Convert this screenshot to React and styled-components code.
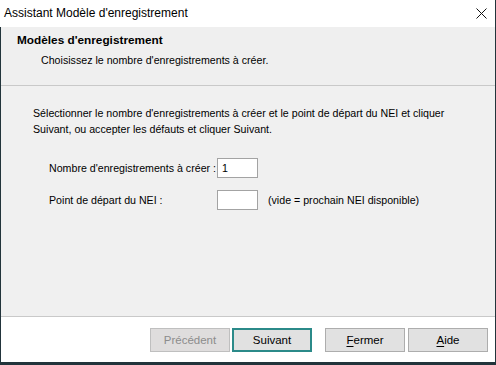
import React, { useState } from "react";
import styled, { createGlobalStyle } from "styled-components";

const GlobalStyle = createGlobalStyle`
  html, body {
    margin: 0;
    padding: 0;
    background: #22343b;
    overflow: hidden;
  }
  * { box-sizing: border-box; }
`;

const Window = styled.div`
  width: 494px;
  height: 362px;
  margin-left: 1px;
  display: flex;
  flex-direction: column;
  background: #f0f0f0;
  font-family: "Liberation Sans", Arial, sans-serif;
  font-size: 10.65px;
  color: #000;
`;

const TitleBar = styled.div`
  height: 27px;
  flex: none;
  display: flex;
  align-items: center;
  justify-content: space-between;
  padding: 0 8px 1px 4px;
  background: #ffffff;
  font-size: 12px;
  margin-left: -1px;
`;

const CloseIcon = styled.svg`
  width: 11px;
  height: 11px;
  margin-top: 1px;
`;

const Header = styled.div`
  height: 59px;
  flex: none;
  padding: 7px 16px 0;
  border-bottom: 1px solid #c9c9c9;
  background: #efefef;
`;

const HeaderTitle = styled.div`
  font-weight: bold;
  font-size: 11.8px;
  line-height: 13px;
`;

const HeaderSub = styled.div`
  margin-top: 7px;
  padding-left: 24px;
  line-height: 13px;
`;

const Body = styled.div`
  flex: 1;
  padding: 19px 32px 0;
`;

const Intro = styled.p`
  margin: 0;
  line-height: 16px;
`;

const Form = styled.div`
  margin-top: 21px;
  padding-left: 16px;
  display: grid;
  grid-template-columns: 168px 41px auto;
  row-gap: 12px;
  align-items: center;
`;

const Label = styled.span`
  white-space: nowrap;
`;

const Field = styled.input`
  width: 41px;
  height: 20px;
  border: 1px solid #a3a3a3;
  background: #fff;
  padding: 0 4px;
  font: inherit;
  outline: none;
`;

const Hint = styled.span`
  padding-left: 10px;
`;

const Footer = styled.div`
  height: 46px;
  flex: none;
  border-top: 1px solid #c9c9c9;
  background: #ffffff;
  display: flex;
  justify-content: flex-end;
  padding: 11px 7px 0 0;
`;

const Button = styled.button`
  width: 80px;
  height: 24px;
  margin-left: ${(p) => p.$gap || 0}px;
  background: ${(p) => (p.disabled ? "#dfdddd" : "#e1e1e1")};
  border: ${(p) => (p.$primary ? "2px solid #2b8a89" : "1px solid")};
  border-color: ${(p) => (p.$primary ? "#2b8a89" : p.disabled ? "#bfbfbf" : "#adadad")};
  color: ${(p) => (p.disabled ? "#8c8c8c" : "#000")};
  font-family: "Liberation Sans", Arial, sans-serif;
  font-size: 11.5px;
  padding: 0;
  u { text-decoration-thickness: 1px; text-underline-offset: 2px; }
`;

export default function App() {
  const [count, setCount] = useState("1");
  const [start, setStart] = useState("");
  return (
    <>
      <GlobalStyle />
      <Window>
        <TitleBar>
          <span>Assistant Modèle d'enregistrement</span>
          <CloseIcon viewBox="0 0 11 11">
            <path d="M0.5 0.5L10.5 10.5M10.5 0.5L0.5 10.5" stroke="#111" strokeWidth="1" />
          </CloseIcon>
        </TitleBar>
        <Header>
          <HeaderTitle>Modèles d'enregistrement</HeaderTitle>
          <HeaderSub>Choisissez le nombre d'enregistrements à créer.</HeaderSub>
        </Header>
        <Body>
          <Intro>
            Sélectionner le nombre d'enregistrements à créer et le point de départ du NEI et cliquer
            <br />
            Suivant, ou accepter les défauts et cliquer Suivant.
          </Intro>
          <Form>
            <Label>Nombre d'enregistrements à créer :</Label>
            <Field value={count} onChange={(e) => setCount(e.target.value)} />
            <span />
            <Label>Point de départ du NEI :</Label>
            <Field value={start} onChange={(e) => setStart(e.target.value)} />
            <Hint>(vide = prochain NEI disponible)</Hint>
          </Form>
        </Body>
        <Footer>
          <Button disabled>Précédent</Button>
          <Button $primary $gap={2}>Suivant</Button>
          <Button $gap={13}><u>F</u>ermer</Button>
          <Button $gap={3}><u>A</u>ide</Button>
        </Footer>
      </Window>
    </>
  );
}
